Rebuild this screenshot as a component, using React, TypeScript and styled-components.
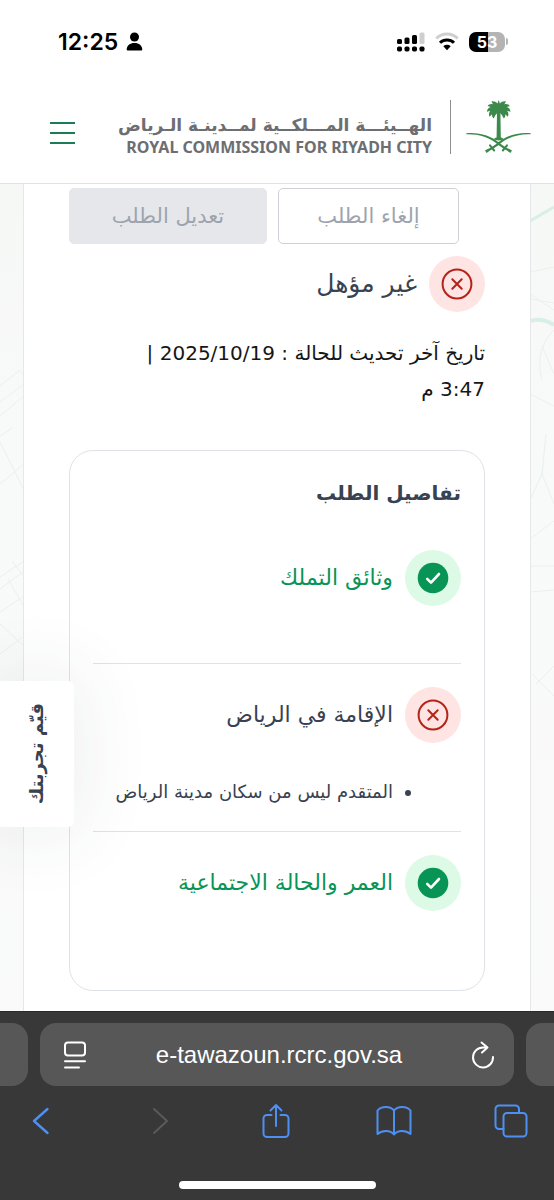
import React from "react";
import styled, { createGlobalStyle, css } from "styled-components";

const sans = `"Noto Sans", "DejaVu Sans", sans-serif`;
const arabic = `"DejaVu Sans", "Noto Sans", sans-serif`;

const GlobalStyle = createGlobalStyle`
  * { box-sizing: border-box; }
  body { margin: 0; background: #fff; font-family: ${arabic}; color: #384250; }
  button { font: inherit; color: inherit; background: none; border: 0; padding: 0; cursor: pointer; }
  h1, h2, h3, p, ul { margin: 0; padding: 0; }
  svg { display: block; flex: none; }
`;

const Screen = styled.div`
  position: relative;
  min-height: 100vh;
  display: flex;
  flex-direction: column;
  overflow: hidden;
`;

const StatusBar = styled.div`
  display: flex;
  direction: ltr;
  align-items: center;
  justify-content: space-between;
  height: 83px;
  padding: 0 46px 0 58px;
  color: #000;
`;

const Clock = styled.div`
  display: flex;
  align-items: center;
  gap: 8px;
  font: 600 23px/28px Inter, sans-serif;
`;

const Indicators = styled.div`
  display: flex;
  align-items: center;
  gap: 10px;
`;

const Battery = styled.div`
  display: flex;
  align-items: center;
  gap: 1px;
  &::after {
    content: "";
    width: 2px;
    height: 7px;
    border-radius: 0 2px 2px 0;
    background: #b4b4b4;
  }
`;

const Charge = styled.span`
  width: 36px;
  border-radius: 7px;
  background: linear-gradient(90deg, #000 53%, #b4b4b4 53%);
  color: #fff;
  text-align: center;
  font: 700 16px/20px Inter, sans-serif;
`;

const SiteHeader = styled.header`
  display: flex;
  direction: ltr;
  align-items: center;
  justify-content: space-between;
  height: 101px;
  padding: 0 23px 13px 50px;
  border-bottom: 1px solid #e0e2e3;
`;

const MenuButton = styled.button`
  display: flex;
  flex-direction: column;
  gap: 8px;
  padding-top: 12px;
  span {
    width: 25px;
    height: 2px;
    background: #1b7d55;
  }
`;

const Brand = styled.a`
  display: flex;
  align-items: center;
  gap: 15px;
  text-decoration: none;
  color: #6d6e71;
`;

const BrandName = styled.span`
  display: flex;
  flex-direction: column;
  padding-top: 16px;
  margin-right: 3px;
  text-align: right;
  white-space: nowrap;
`;

const BrandArabic = styled.span`
  font: 700 17px/24px ${arabic};
`;

const BrandEnglish = styled.span`
  font: 700 16px/20px ${sans};
`;

const BrandRule = styled.span`
  width: 1px;
  height: 54px;
  background: #8d8e90;
`;

const Backdrop = styled.main`
  position: relative;
  flex: 1;
  padding: 0 23px;
  background: linear-gradient(#f6f8f6, #f8f9f9 30%, #fafafa);
`;

const MapLines = styled.svg`
  position: absolute;
  top: 0;
  width: 24px;
  height: 827px;
  fill: none;
`;

const LeftMap = styled(MapLines)`
  left: 0;
`;

const RightMap = styled(MapLines)`
  right: 0;
`;

const Sheet = styled.section`
  position: relative;
  height: 100%;
  padding: 4px 45px 20px;
  border: solid #e5e7eb;
  border-width: 0 1px;
  background: #fff;
`;

const Actions = styled.div`
  display: flex;
  gap: 11px;
  padding-right: 26px;
`;

const ActionButton = styled.button<{ $filled?: boolean }>`
  flex: ${(p) => (p.$filled ? "198 1 0" : "181 1 0")};
  height: 56px;
  border: 1px solid ${(p) => (p.$filled ? "#e5e7eb" : "#cdd1d7")};
  border-radius: 5px;
  background: ${(p) => (p.$filled ? "#e5e7eb" : "#fff")};
  color: #9da4ae;
  font-size: 21px;
  line-height: 28px;
`;

const StatusLine = styled.div`
  display: flex;
  align-items: center;
  gap: 12px;
`;

const Verdict = styled(StatusLine)`
  margin-top: 12px;
`;

const Badge = styled.span<{ $ok?: boolean }>`
  display: grid;
  place-items: center;
  flex: none;
  width: 56px;
  height: 56px;
  border-radius: 50%;
  background: ${(p) => (p.$ok ? "#dcfae6" : "#fee4e2")};
`;

const VerdictTitle = styled.h1`
  font-size: 25px;
  line-height: 40px;
  font-weight: 400;
`;

const Updated = styled.p`
  margin-top: 23px;
  max-width: 360px;
  color: #161616;
  font-size: 20px;
  line-height: 36px;
`;

const Details = styled.section`
  margin-top: 43px;
  padding: 24px 23px 22px;
  border: 1px solid #dfe2e7;
  border-radius: 24px;
`;

const DetailsTitle = styled.h2`
  font-size: 20px;
  line-height: 36px;
  font-weight: 700;
`;

const Criteria = styled.ul`
  margin-top: 39px;
  list-style: none;
`;

const Criterion = styled.li`
  padding-bottom: 24px;
  & + & { padding-top: 23px; }
  &:not(:last-child) { border-bottom: 1px solid #dfe2e7; }
`;

const CriterionTitle = styled.h3<{ $ok?: boolean }>`
  font-size: 22px;
  line-height: 36px;
  font-weight: 400;
  color: ${(p) => (p.$ok ? "#079455" : "#384250")};
`;

const Reasons = styled.ul`
  margin-top: 33px;
  padding-right: 68px;
  list-style: disc;
  li {
    font-size: 18px;
    line-height: 31px;
  }
`;

const FeedbackTab = styled.button`
  position: absolute;
  left: 0;
  top: 681px;
  width: 74px;
  height: 146px;
  border-radius: 0 6px 6px 0;
  background: #fff;
  box-shadow: 0 0 70px 10px rgba(56, 66, 80, 0.08);
  display: flex;
  align-items: center;
  justify-content: center;
`;

const FeedbackText = styled.span`
  writing-mode: vertical-rl;
  transform: rotate(180deg);
  white-space: nowrap;
  font-size: 18px;
  line-height: 28px;
  font-weight: 700;
`;

const BrowserBar = styled.footer`
  position: relative;
  direction: ltr;
  padding-top: 11px;
  background: #383838;
  border-top: 1px solid #2a2a2a;
`;

const Tabs = styled.div`
  display: flex;
  gap: 12px;
`;

const sideTab = css`
  width: 28px;
  height: 63px;
  background: #575757;
`;

const PreviousTab = styled.div`
  ${sideTab}
  border-radius: 0 16px 16px 0;
`;

const NextTab = styled.div`
  ${sideTab}
  border-radius: 16px 0 0 16px;
`;

const AddressBar = styled.div`
  flex: 1;
  display: flex;
  align-items: center;
  justify-content: space-between;
  height: 63px;
  padding: 0 19px 0 23px;
  border-radius: 16px;
  background: #575757;
  color: #fff;
  font: 400 24px/30px "Liberation Sans", sans-serif;
`;

const Toolbar = styled.nav`
  display: flex;
  align-items: center;
  justify-content: space-between;
  height: 70px;
  padding: 0 25px 0 23px;
  color: #4e8ff2;
`;

const ToolButton = styled.button<{ $dim?: boolean }>`
  display: grid;
  place-items: center;
  ${(p) => p.$dim && "color: #5a5a5a;"}
  ${Toolbar} & {
    width: 36px;
    height: 44px;
  }
`;

const HomeIndicator = styled.div`
  width: 197px;
  height: 8px;
  margin: 25px auto 11px;
  border-radius: 4px;
  background: #fff;
`;

const CrossIcon = () => (
  <svg width="32" height="32" viewBox="0 0 32 32" fill="none" stroke="#b42318" strokeWidth="2" strokeLinecap="round">
    <circle cx="16" cy="16" r="14.4" />
    <path d="M11.3 11.3l9.4 9.4M20.7 11.3l-9.4 9.4" />
  </svg>
);

const CheckIcon = () => (
  <svg width="32" height="32" viewBox="0 0 32 32" fill="none">
    <circle cx="16" cy="16" r="15.3" fill="#079455" />
    <path d="M10.2 16.8l3.8 3.8 8-8.6" stroke="#fff" strokeWidth="2.6" strokeLinecap="round" strokeLinejoin="round" />
  </svg>
);

const PersonIcon = () => (
  <svg width="17" height="19" viewBox="0 0 17 19">
    <circle cx="8.5" cy="5" r="4.5" />
    <path d="M.7 17.6C.7 13.6 4 11 8.5 11s7.8 2.6 7.8 6.6c0 .6-.4.9-1 .9H1.700c-.6 0-1-.3-1-.9z" />
  </svg>
);

const SignalIcon = () => (
  <svg width="29" height="20" viewBox="0 0 29 20">
    <rect x="1" y="7" width="5" height="5" rx="1.500" />
    <rect x="8.500" y="5.500" width="5" height="6.500" rx="1.500" />
    <rect x="16" y="3" width="5" height="9" rx="1.500" />
    <rect x="23.500" y=".5" width="5" height="11.500" rx="1.500" fill="#cfcfcf" />
    <rect x="1" y="14.500" width="5" height="5" rx="1.700" />
    <rect x="8.500" y="14.500" width="5" height="5" rx="1.700" />
    <rect x="16" y="14.500" width="5" height="5" rx="1.700" />
    <rect x="23.500" y="14.500" width="5" height="5" rx="1.700" />
  </svg>
);

const WifiIcon = () => (
  <svg width="24" height="19" viewBox="0 0 24 19" fill="none" strokeWidth="3">
    <path d="M1.300 6.500a15.200 15.200 0 0 1 21.400 0" stroke="#cfcfcf" />
    <path d="M5 10.800a10 10 0 0 1 14 0" stroke="#000" />
    <path d="M12 18.300l-3.700-4a5.400 5.400 0 0 1 7.400 0z" fill="#000" />
  </svg>
);

const Emblem = () => (
  <svg width="65" height="56" viewBox="0 0 65 56" fill="#3b8a4c" role="img" aria-label="Palm and swords">
    <path d="M31 13h3.400l.4 25.500c1.500.2 2.600 1 2.800 2l-4.900 1-4.900-1c.2-1 1.300-1.800 2.800-2z" />
    <path d="M32.700 1l1.200 3.600c1.500-1.800 3.600-2.600 6-2.200l-1.600 3c2.200-.7 4.300-.1 5.500 1.700l-3 .9c2.200.8 3.600 2.500 3.700 4.800l-3.300-1c1.300 1.700 1.600 3.900.7 5.900l-2.600-2.500c.2 1.700-.3 3.200-1.500 4.300l-1.900-3.600-1.700-1.600h-3l-1.700 1.600-1.900 3.600c-1.200-1.100-1.700-2.600-1.500-4.300l-2.600 2.500c-.9-2-.6-4.200.7-5.900l-3.300 1c.1-2.300 1.500-4 3.700-4.800l-3-.9c1.200-1.800 3.300-2.400 5.500-1.700l-1.600-3c2.400-.4 4.500.4 6 2.200z" />
    <path d="M.3 34.300C13 33 25 37 33 43.500c4 3.300 7 5.300 10.300 6.600l2.700 1.500-1.600 2.400-3.400-2.400C37 49.400 33.500 47 30 44 22 38 12 34.800.3 35.300z" />
    <path d="M64.700 34.300C52 33 40 37 32 43.500c-4 3.300-7 5.300-10.300 6.600L19 51.600l1.600 2.400 3.400-2.400c4-2.200 7.500-4.600 11-7.600 8-6 18-9.200 29.700-8.700z" />
    <path d="M41 46.300l-4.200 5.200M24 46.300l4.200 5.200" stroke="#3b8a4c" strokeWidth="2" strokeLinecap="round" />
  </svg>
);

const ReaderIcon = () => (
  <svg width="24" height="28" viewBox="0 0 24 28" fill="none" stroke="#fff" strokeWidth="2" strokeLinecap="round">
    <rect x="2" y="1.500" width="20" height="13" rx="3" />
    <path d="M2 20.300h20M2 26.500h14" />
  </svg>
);

const ReloadIcon = () => (
  <svg width="24" height="28" viewBox="0 0 24 28" fill="none" stroke="#fff" strokeWidth="2" strokeLinecap="round" strokeLinejoin="round">
    <path d="M16 6.400h-4A10 10 0 1 0 22 16M10.500 1.500l6 5-5.500 5" />
  </svg>
);

const toolIcon = { fill: "none", stroke: "currentColor", strokeWidth: 2, strokeLinecap: "round", strokeLinejoin: "round" } as const;

const BackIcon = () => (
  <svg width="18" height="28" viewBox="0 0 18 28" {...toolIcon} strokeWidth={2.4}><path d="M15.500 2L2 14l13.500 12" /></svg>
);

const ForwardIcon = () => (
  <svg width="18" height="28" viewBox="0 0 18 28" {...toolIcon}><path d="M4 2l13 12L4 26" /></svg>
);

const ShareIcon = () => (
  <svg width="28" height="36" viewBox="0 0 28 36" {...toolIcon}>
    <path d="M9.500 12H5a3.500 3.500 0 0 0-3.500 3.500v15A3.500 3.500 0 0 0 5 34h18a3.500 3.500 0 0 0 3.500-3.500v-15A3.500 3.500 0 0 0 23 12h-4.500M14 23V2M8.500 7.500L14 2l5.500 5.500" />
  </svg>
);

const BookIcon = () => (
  <svg width="36" height="32" viewBox="0 0 36 32" {...toolIcon}>
    <path d="M18 5.500C16 3 13.500 2 10 2S3.500 3 1.500 5.500V29c2.500-2 5-3 8.500-3s6 1 8 3.500c2-2.500 4.500-3.500 8-3.500s6 1 8.500 3V5.500C32.500 3 29.500 2 26 2s-6 1-8 3.500zM18 5.500v24" />
  </svg>
);

const TabsIcon = () => (
  <svg width="34" height="34" viewBox="0 0 34 34" {...toolIcon}>
    <rect x="9.500" y="9" width="23" height="23.500" rx="3.500" />
    <path d="M9.500 25H5a3.500 3.500 0 0 1-3.500-3.500V5A3.500 3.500 0 0 1 5 1.500h16.500A3.500 3.500 0 0 1 25 5v4" />
  </svg>
);

const criteria = [
  { title: "وثائق التملك", ok: true, reasons: [] },
  { title: "الإقامة في الرياض", ok: false, reasons: ["المتقدم ليس من سكان مدينة الرياض"] },
  { title: "العمر والحالة الاجتماعية", ok: true, reasons: [] },
];

export default function App() {
  return (
    <Screen dir="rtl" lang="ar">
      <GlobalStyle />
      <StatusBar>
        <Clock>12:25<PersonIcon /></Clock>
        <Indicators>
          <SignalIcon />
          <WifiIcon />
          <Battery><Charge>53</Charge></Battery>
        </Indicators>
      </StatusBar>
      <SiteHeader>
        <MenuButton aria-label="القائمة"><span /><span /><span /></MenuButton>
        <Brand href="#">
          <BrandName>
            <BrandArabic dir="rtl">الهــيئـــة المـــلكــية لمــدينـة الـرياض</BrandArabic>
            <BrandEnglish>ROYAL COMMISSION FOR RIYADH CITY</BrandEnglish>
          </BrandName>
          <BrandRule />
          <Emblem />
        </Brand>
      </SiteHeader>
      <Backdrop>
        <LeftMap viewBox="0 0 24 827" stroke="#e9f0ed">
          <path d="M0 202l20-16 4 6M0 218l24-18M0 232l24-20M0 252l12-8M0 258l24 48M0 300l24-20M0 393l24-16M0 405l24-18M8 395l16 28M0 428l24-16M0 440l24 22M0 470l24-18M12 377l12 16" />
        </LeftMap>
        <RightMap viewBox="0 0 24 827" stroke="#e9f0ed">
          <path d="M0 37l24-14" stroke="#d8efe6" strokeWidth="3" />
          <path d="M0 137q12-4 24 4" stroke="#d8efe6" strokeWidth="4" />
          <path d="M0 88l24-5M0 110l24 16M0 115l24 4M24 146q-20 20-12 50M12 162l12 28M0 210l24 12M16 250l-4 40 12 30M12 290l-12 26M0 355l24-18M0 382h24M0 408l24-2M6 500l18-18M2 490l22 22" />
        </RightMap>
        <Sheet>
          <Actions>
            <ActionButton disabled>إلغاء الطلب</ActionButton>
            <ActionButton disabled $filled>تعديل الطلب</ActionButton>
          </Actions>
          <Verdict>
            <Badge><CrossIcon /></Badge>
            <VerdictTitle>غير مؤهل</VerdictTitle>
          </Verdict>
          <Updated>تاريخ آخر تحديث للحالة : 2025/10/19 | 3:47 م</Updated>
          <Details>
            <DetailsTitle>تفاصيل الطلب</DetailsTitle>
            <Criteria>
              {criteria.map((c) => (
                <Criterion key={c.title}>
                  <StatusLine>
                    <Badge $ok={c.ok}>{c.ok ? <CheckIcon /> : <CrossIcon />}</Badge>
                    <CriterionTitle $ok={c.ok}>{c.title}</CriterionTitle>
                  </StatusLine>
                  <Reasons>{c.reasons.map((r) => <li key={r}>{r}</li>)}</Reasons>
                </Criterion>
              ))}
            </Criteria>
          </Details>
        </Sheet>
      </Backdrop>
      <FeedbackTab><FeedbackText>قيّم تجربتك</FeedbackText></FeedbackTab>
      <BrowserBar>
        <Tabs>
          <PreviousTab />
          <AddressBar>
            <ToolButton aria-label="Reader"><ReaderIcon /></ToolButton>
            <span>e-tawazoun.rcrc.gov.sa</span>
            <ToolButton aria-label="Reload"><ReloadIcon /></ToolButton>
          </AddressBar>
          <NextTab />
        </Tabs>
        <Toolbar>
          <ToolButton aria-label="Back"><BackIcon /></ToolButton>
          <ToolButton aria-label="Forward" $dim><ForwardIcon /></ToolButton>
          <ToolButton aria-label="Share"><ShareIcon /></ToolButton>
          <ToolButton aria-label="Bookmarks"><BookIcon /></ToolButton>
          <ToolButton aria-label="Tabs"><TabsIcon /></ToolButton>
        </Toolbar>
        <HomeIndicator />
      </BrowserBar>
    </Screen>
  );
}
